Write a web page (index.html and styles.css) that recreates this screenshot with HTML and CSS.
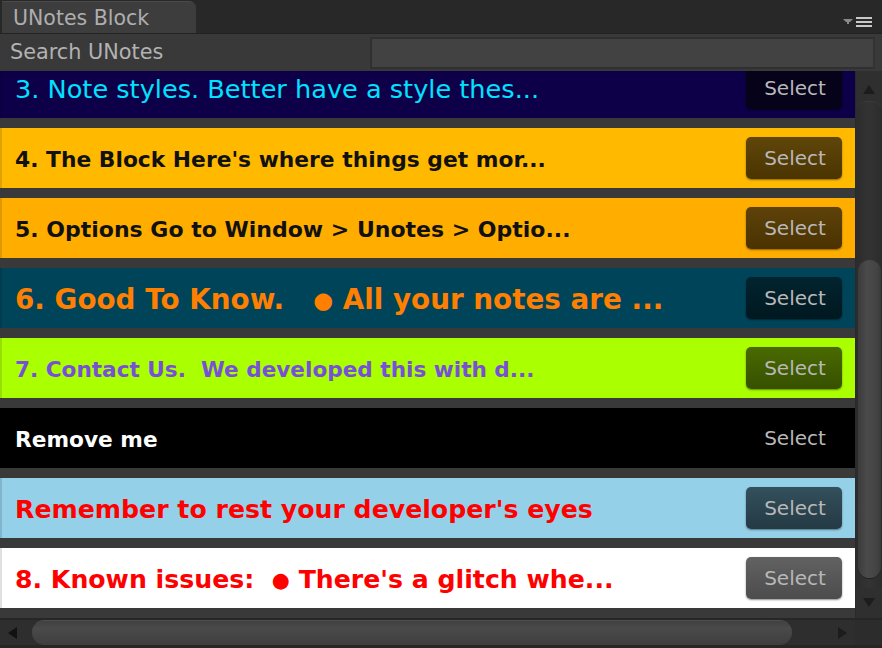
FILE: index.html
```html
<!DOCTYPE html>
<html>
<head>
<meta charset="utf-8">
<link rel="stylesheet" href="styles.css">
</head>
<body>
<div class="window">
  <div class="tabbar">
    <div class="tab">UNotes Block</div>
    <div class="menu">
      <svg width="30" height="12" viewBox="0 0 30 12">
        <path d="M0 2 H10 L7 5 H6 V7 H4 V5 H3 Z" fill="#8a8a8a"/>
        <rect x="13" y="0" width="16" height="2" fill="#c8c8c8"/>
        <rect x="13" y="4" width="16" height="2" fill="#c8c8c8"/>
        <rect x="13" y="8" width="16" height="2" fill="#c8c8c8"/>
      </svg>
    </div>
  </div>
  <div class="toolbar">
    <span class="label">Search UNotes</span>
    <div class="search"></div>
  </div>
  <div class="body">
    <div class="listwrap">
      <div class="list">
        <div class="row r3"><span class="txt">3. Note styles. Better have a style thes...</span><button class="sel">Select</button></div>
        <div class="row r4"><span class="txt">4. The Block Here's where things get mor...</span><button class="sel">Select</button></div>
        <div class="row r5"><span class="txt">5. Options Go to Window &gt; Unotes &gt; Optio...</span><button class="sel">Select</button></div>
        <div class="row r6"><span class="txt">6. Good To Know.&nbsp;&nbsp; <span class="dot">●</span> All your notes are ...</span><button class="sel">Select</button></div>
        <div class="row r7"><span class="txt">7. Contact Us.&nbsp; We developed this with d...</span><button class="sel">Select</button></div>
        <div class="row r8"><span class="txt">Remove me</span><button class="sel">Select</button></div>
        <div class="row r9"><span class="txt">Remember to rest your developer's eyes</span><button class="sel">Select</button></div>
        <div class="row r10"><span class="txt">8. Known issues:&nbsp; <span class="dot">●</span> There's a glitch whe...</span><button class="sel">Select</button></div>
      </div>
      <div class="vscroll">
        <div class="arrow up"></div>
        <div class="vtrack"><div class="vthumb"></div></div>
        <div class="arrow down"></div>
      </div>
    </div>
    <div class="hscroll">
      <div class="harrow left"></div>
      <div class="htrack"><div class="hthumb"></div></div>
      <div class="harrow right"></div>
      <div class="corner"></div>
    </div>
  </div>
</div>
</body>
</html>
```
FILE: styles.css
```css
* { box-sizing: border-box; }
html, body { margin: 0; padding: 0; }
body {
  width: 882px;
  height: 648px;
  overflow: hidden;
  background: #383838;
  font-family: "DejaVu Sans", "Liberation Sans", sans-serif;
}
.window { display: flex; flex-direction: column; height: 648px; }

.tabbar {
  height: 34px;
  background: #282828;
  display: flex;
  align-items: flex-end;
  justify-content: space-between;
  border-bottom: 1px solid #222;
}
.tab {
  width: 194px;
  height: 32px;
  margin-left: 2px;
  background: #3d3d3d;
  border-radius: 0 7px 0 0;
  border-top: 1px solid #4a4a4a;
  color: #aeaeae;
  font-size: 20.5px;
  line-height: 32px;
  padding-left: 11px;
}
.menu { padding: 0 9px 4px 0; display: flex; }

.toolbar {
  height: 37px;
  background: #393939;
  display: flex;
  align-items: center;
  justify-content: space-between;
  padding: 0 7px 0 10px;
}
.label { color: #b2b2b2; font-size: 20.8px; margin-top: -2px; }
.search {
  width: 505px;
  height: 32px;
  background: #424242;
  border: 2px solid #303030;
  border-right-color: #333;
}

.body { flex: 1; display: flex; flex-direction: column; }
.listwrap { height: 547px; display: flex; overflow: hidden; }
.list { width: 855px; overflow: hidden; background: #393939; }
.row {
  height: 60px;
  margin-bottom: 10px;
  display: flex;
  align-items: center;
  justify-content: space-between;
  padding: 0 13px 0 13px;
  border-left: 2px solid rgba(0,0,0,0.12);
  font-weight: bold;
  font-size: 21.8px;
  white-space: nowrap;
}
.row:first-child { margin-top: -13px; }
.txt { margin-top: 2px; }
.dot { font-size: 0.82em; vertical-align: 0.04em; }
.sel {
  width: 96px;
  height: 42px;
  border: none;
  border-radius: 5px;
  color: #b8b8b8;
  font-family: "DejaVu Sans", sans-serif;
  font-size: 20px;
  font-weight: normal;
  padding: 0 0 0 2px;
  box-shadow: 0 1px 2px rgba(0,0,0,0.45);
}
.r3 { background: #0d0048; color: #00e2ff; font-weight: normal; font-size: 25.6px; }
.r3 .sel { background: #05021a; box-shadow: 0 1px 2px rgba(0,0,0,0.6); }
.r4 { background: #ffba00; color: #111; }
.r4 .sel { background: linear-gradient(#60460a, #4a3400); }
.r5 { background: #ffae00; color: #111; font-size: 22px; }
.r5 .sel { background: linear-gradient(#5e420a, #4a3200); }
.r6 { background: #00445a; color: #ff8000; font-size: 27.8px; }
.r6 .sel { background: linear-gradient(#02242e, #001820); }
.r7 { background: #aaff00; color: #7750d8; font-size: 21.6px; }
.r7 .sel { background: linear-gradient(#4a6a00, #375000); }
.r8 { background: #000; color: #fff; font-size: 21.7px; }
.r8 .sel { background: #000; box-shadow: none; }
.r9 { background: #95d0e9; color: #ff0000; font-size: 25.2px; }
.r9 .sel { background: linear-gradient(#33505c, #243a44); }
.r10 { background: #fff; color: #ff0000; font-size: 25.2px; }
.r10 .sel { background: linear-gradient(#626262, #4c4c4c); }

.vscroll {
  width: 27px;
  background: #2f2f2f;
  display: flex;
  flex-direction: column;
  border-left: 1px solid #2a2a2a;
}
.arrow { height: 34px; display: flex; justify-content: center; align-items: center; }
.arrow.up::before {
  content: ""; border-left: 6px solid transparent; border-right: 6px solid transparent;
  border-bottom: 9px solid #1c1c1c; margin-top: 6px;
}
.arrow.down::before {
  content: ""; border-left: 6px solid transparent; border-right: 6px solid transparent;
  border-top: 9px solid #1c1c1c; margin-bottom: 2px;
}
.vtrack {
  flex: 1;
  background: linear-gradient(90deg, #2c2c2c, #333 50%, #2c2c2c);
  border-top: 1px solid #3a3a3a;
  border-radius: 10px 10px 0 0;
  padding: 158px 1px 10px 2px;
}
.vthumb {
  height: 318px;
  border-radius: 12px;
  background: linear-gradient(90deg, #3c3c3c, #4a4a4a 40%, #444 80%, #3a3a3a);
  box-shadow: 0 1px 0 #222;
}
.hscroll {
  height: 30px;
  display: flex;
  background: #2e2e2e;
  border-top: 2px solid #262626;
  border-bottom: 3px solid #262626;
}
.harrow { width: 30px; display: flex; align-items: center; justify-content: center; }
.harrow.left::before {
  content: ""; border-top: 6px solid transparent; border-bottom: 6px solid transparent;
  border-right: 9px solid #121212; margin-left: -6px;
}
.harrow.right::before {
  content: ""; border-top: 6px solid transparent; border-bottom: 6px solid transparent;
  border-left: 9px solid #1c1c1c; margin-left: 4px;
}
.htrack { width: 795px; padding: 0 0 0 2px; display: flex; }
.hthumb {
  width: 760px;
  height: 25px;
  border-radius: 13px;
  background: linear-gradient(#404040, #4a4a4a 30%, #3e3e3e);
  border-top: 1px solid #505050;
}
.corner { width: 27px; background: #2c2c2c; }
```
